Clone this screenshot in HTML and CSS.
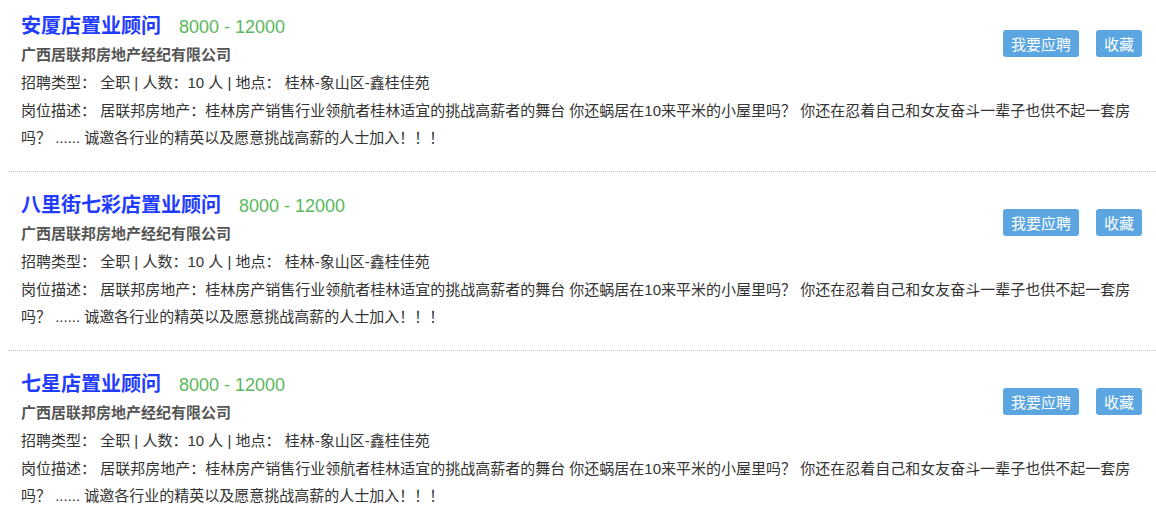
FILE: index.html
```html
<!DOCTYPE html>
<html lang="zh-CN">

<head>
    <meta charset="UTF-8">
    <meta name="viewport" content="width=device-width, initial-scale=1.0">
    <title>职位列表</title>
    <link rel="stylesheet" href="styles.css">
</head>

<body>
    <ul class="jobList">
        <li class="job">
            <div class="btns">
                <button type="button">我要应聘</button>
                <button type="button">收藏</button>
            </div>
            <h3 class="jobTitle">安厦店置业顾问<span class="salary">8000 - 12000</span></h3>
            <p class="company">广西居联邦房地产经纪有限公司</p>
            <p class="info">招聘类型： 全职 | 人数：10 人 | 地点： 桂林-象山区-鑫桂佳苑</p>
            <p class="desc">岗位描述： 居联邦房地产：桂林房产销售行业领航者桂林适宜的挑战高薪者的舞台 你还蜗居在10来平米的小屋里吗？ 你还在忍着自己和女友奋斗一辈子也供不起一套房吗？ ...... 诚邀各行业的精英以及愿意挑战高薪的人士加入！！！</p>
        </li>
        <li class="job">
            <div class="btns">
                <button type="button">我要应聘</button>
                <button type="button">收藏</button>
            </div>
            <h3 class="jobTitle">八里街七彩店置业顾问<span class="salary">8000 - 12000</span></h3>
            <p class="company">广西居联邦房地产经纪有限公司</p>
            <p class="info">招聘类型： 全职 | 人数：10 人 | 地点： 桂林-象山区-鑫桂佳苑</p>
            <p class="desc">岗位描述： 居联邦房地产：桂林房产销售行业领航者桂林适宜的挑战高薪者的舞台 你还蜗居在10来平米的小屋里吗？ 你还在忍着自己和女友奋斗一辈子也供不起一套房吗？ ...... 诚邀各行业的精英以及愿意挑战高薪的人士加入！！！</p>
        </li>
        <li class="job">
            <div class="btns">
                <button type="button">我要应聘</button>
                <button type="button">收藏</button>
            </div>
            <h3 class="jobTitle">七星店置业顾问<span class="salary">8000 - 12000</span></h3>
            <p class="company">广西居联邦房地产经纪有限公司</p>
            <p class="info">招聘类型： 全职 | 人数：10 人 | 地点： 桂林-象山区-鑫桂佳苑</p>
            <p class="desc">岗位描述： 居联邦房地产：桂林房产销售行业领航者桂林适宜的挑战高薪者的舞台 你还蜗居在10来平米的小屋里吗？ 你还在忍着自己和女友奋斗一辈子也供不起一套房吗？ ...... 诚邀各行业的精英以及愿意挑战高薪的人士加入！！！</p>
        </li>
    </ul>
</body>

</html>
```

FILE: styles.css
```css
* {
    margin: 0;
    padding: 0;
}

body {
    font-family: "Liberation Sans", "Noto Sans CJK SC", sans-serif;
    color: #333;
}

ul,
li {
    list-style: none;
}

.jobList {
    padding-left: 8px;
}

.job {
    padding: 18px 14px 20px 13px;
    border-bottom: 1px dotted #c8c8c8;
}

.job:first-child {
    padding-top: 11px;
}

.job:last-child {
    border-bottom: none;
}

.jobTitle {
    height: 30px;
    font-size: 20px;
    line-height: 30px;
    color: #1f3cff;
}

.jobTitle .salary {
    margin-left: 18px;
    font-size: 18px;
    line-height: 1;
    font-weight: normal;
    color: #5cb85c;
}

.company {
    font-size: 15px;
    line-height: 28px;
    font-weight: bold;
    color: #555;
}

.info {
    font-size: 15px;
    line-height: 28px;
}

.desc {
    font-size: 15px;
    line-height: 27px;
}

.btns {
    float: right;
    margin-top: 19px;
    display: flex;
    gap: 17px;
}

.btns button {
    height: 27px;
    padding: 0 8px;
    border: none;
    border-radius: 3px;
    background: #5ba6e1;
    color: #fff;
    font-family: inherit;
    font-size: 15px;
    cursor: pointer;
}
```
